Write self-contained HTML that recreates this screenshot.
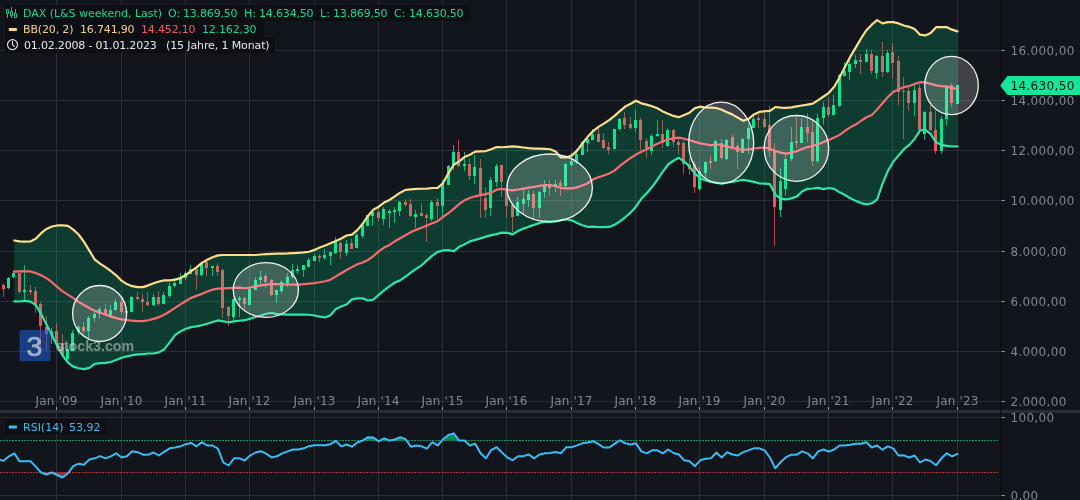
<!DOCTYPE html>
<html><head><meta charset="utf-8"><title>DAX Chart</title>
<style>
html,body{margin:0;padding:0;background:#12151c;}
body{width:1080px;height:500px;overflow:hidden;position:relative;-webkit-font-smoothing:antialiased;font-family:"DejaVu Sans","Liberation Sans",sans-serif;}
svg{position:absolute;left:0;top:0;will-change:transform;}
.lg{position:absolute;left:5px;height:16px;background:#0d0f14;}
.lg span{will-change:transform;}
.lg span{position:absolute;top:1px;line-height:16px;font-size:11px;white-space:nowrap;}
.g{color:#14d996} .y{color:#f3d58a} .r{color:#ef5f6a} .w{color:#e6e7ea} .b{color:#3dbff5}
text{font-family:"DejaVu Sans","Liberation Sans",sans-serif;}
</style></head><body>
<svg width="1080" height="500" viewBox="0 0 1080 500">

<path d="M56.5,0V500M121.5,0V500M185.5,0V500M249.5,0V500M314.5,0V500M378.5,0V500M442.5,0V500M506.5,0V500M571.5,0V500M635.5,0V500M699.5,0V500M764.5,0V500M828.5,0V500M892.5,0V500M957.5,0V500M0,50.5H1000M0,100.5H1000M0,150.5H1000M0,200.5H1000M0,251.5H1000M0,301.5H1000M0,351.5H1000M0,401.5H1000" stroke="#2b2e37" stroke-width="1" fill="none" shape-rendering="crispEdges"/>
<path d="M0,417.5H1000M0,495.5H1000" stroke="#2b2e37" stroke-width="1" fill="none" shape-rendering="crispEdges"/>
<path d="M3,283h1V297h-1ZM19,273h1V293h-1ZM30,285h1V295h-1ZM35,287h1V313h-1ZM40,302h1V348h-1ZM46,316h1V350h-1ZM56,323h1V349h-1ZM62,334h1V357h-1ZM83,322h1V334h-1ZM105,304h1V315h-1ZM121,298h1V314h-1ZM137,292h1V300h-1ZM142,294h1V312h-1ZM147,292h1V306h-1ZM158,291h1V306h-1ZM196,268h1V290h-1ZM206,260h1V276h-1ZM217,263h1V276h-1ZM222,269h1V318h-1ZM228,306h1V326h-1ZM244,297h1V310h-1ZM265,274h1V288h-1ZM271,279h1V296h-1ZM319,254h1V262h-1ZM340,241h1V259h-1ZM351,239h1V249h-1ZM378,208h1V221h-1ZM405,199h1V207h-1ZM410,199h1V217h-1ZM421,203h1V216h-1ZM426,213h1V242h-1ZM437,198h1V220h-1ZM458,140h1V167h-1ZM469,159h1V180h-1ZM480,159h1V218h-1ZM485,187h1V218h-1ZM501,165h1V197h-1ZM506,188h1V218h-1ZM512,205h1V232h-1ZM533,191h1V220h-1ZM549,181h1V196h-1ZM560,180h1V196h-1ZM598,128h1V142h-1ZM603,133h1V149h-1ZM608,142h1V154h-1ZM624,112h1V129h-1ZM630,117h1V130h-1ZM640,118h1V150h-1ZM646,138h1V158h-1ZM662,120h1V148h-1ZM673,129h1V147h-1ZM678,139h1V154h-1ZM683,141h1V174h-1ZM689,158h1V175h-1ZM694,161h1V193h-1ZM710,155h1V169h-1ZM721,139h1V159h-1ZM732,134h1V148h-1ZM737,143h1V169h-1ZM758,114h1V128h-1ZM764,110h1V128h-1ZM769,106h1V157h-1ZM774,143h1V246h-1ZM796,117h1V148h-1ZM807,113h1V142h-1ZM812,121h1V166h-1ZM828,97h1V117h-1ZM860,54h1V74h-1ZM871,50h1V74h-1ZM882,42h1V77h-1ZM892,43h1V79h-1ZM898,56h1V105h-1ZM903,77h1V139h-1ZM908,85h1V111h-1ZM919,84h1V134h-1ZM930,105h1V131h-1ZM935,111h1V154h-1ZM951,83h1V107h-1Z" fill="#f6505f" fill-opacity="0.74" shape-rendering="crispEdges"/>
<path d="M8,277h1V289h-1ZM13,270h1V278h-1ZM24,265h1V300h-1ZM51,328h1V344h-1ZM67,345h1V361h-1ZM72,330h1V351h-1ZM78,325h1V335h-1ZM88,316h1V338h-1ZM94,312h1V322h-1ZM99,307h1V319h-1ZM110,305h1V318h-1ZM115,299h1V311h-1ZM126,308h1V314h-1ZM131,296h1V312h-1ZM153,294h1V306h-1ZM163,292h1V304h-1ZM169,283h1V298h-1ZM174,278h1V287h-1ZM180,273h1V284h-1ZM185,271h1V280h-1ZM190,265h1V274h-1ZM201,262h1V276h-1ZM212,266h1V276h-1ZM233,298h1V322h-1ZM239,296h1V317h-1ZM249,288h1V305h-1ZM255,277h1V290h-1ZM260,271h1V284h-1ZM276,290h1V303h-1ZM281,280h1V293h-1ZM287,273h1V287h-1ZM292,264h1V279h-1ZM297,265h1V274h-1ZM303,265h1V277h-1ZM308,258h1V267h-1ZM314,254h1V261h-1ZM324,249h1V260h-1ZM330,252h1V265h-1ZM335,237h1V254h-1ZM346,240h1V256h-1ZM356,233h1V248h-1ZM362,225h1V238h-1ZM367,215h1V226h-1ZM372,211h1V226h-1ZM383,207h1V225h-1ZM389,209h1V228h-1ZM394,207h1V223h-1ZM399,201h1V216h-1ZM415,210h1V228h-1ZM431,200h1V221h-1ZM442,180h1V216h-1ZM448,165h1V185h-1ZM453,145h1V170h-1ZM464,152h1V171h-1ZM474,155h1V184h-1ZM490,177h1V216h-1ZM496,164h1V187h-1ZM517,197h1V216h-1ZM523,189h1V213h-1ZM528,190h1V207h-1ZM539,191h1V218h-1ZM544,180h1V198h-1ZM555,180h1V192h-1ZM565,163h1V190h-1ZM571,153h1V166h-1ZM576,149h1V164h-1ZM582,142h1V155h-1ZM587,139h1V152h-1ZM592,129h1V140h-1ZM614,129h1V149h-1ZM619,118h1V130h-1ZM635,110h1V132h-1ZM651,134h1V155h-1ZM657,120h1V137h-1ZM667,128h1V147h-1ZM699,167h1V191h-1ZM705,161h1V178h-1ZM715,140h1V162h-1ZM726,139h1V160h-1ZM742,138h1V153h-1ZM748,125h1V154h-1ZM753,116h1V128h-1ZM780,168h1V217h-1ZM785,154h1V196h-1ZM791,127h1V161h-1ZM801,118h1V143h-1ZM817,114h1V163h-1ZM823,102h1V125h-1ZM833,95h1V115h-1ZM839,74h1V107h-1ZM844,62h1V76h-1ZM849,60h1V80h-1ZM855,55h1V68h-1ZM866,49h1V62h-1ZM876,55h1V79h-1ZM887,50h1V73h-1ZM914,85h1V116h-1ZM924,111h1V140h-1ZM941,116h1V154h-1ZM946,86h1V125h-1ZM957,85h1V104h-1Z" fill="#10e494" fill-opacity="0.74" shape-rendering="crispEdges"/>
<path d="M2,285h3V289h-3ZM18,273h3V292h-3ZM29,290h3V292h-3ZM34,291h3V304h-3ZM39,304h3V326h-3ZM45,327h3V334h-3ZM55,331h3V344h-3ZM61,343h3V355h-3ZM82,327h3V331h-3ZM104,309h3V315h-3ZM120,302h3V312h-3ZM136,297h3V299h-3ZM141,299h3V302h-3ZM146,302h3V305h-3ZM157,297h3V304h-3ZM195,269h3V275h-3ZM205,262h3V268h-3ZM216,266h3V272h-3ZM221,270h3V308h-3ZM227,307h3V316h-3ZM243,298h3V304h-3ZM264,276h3V282h-3ZM270,280h3V295h-3ZM318,256h3V258h-3ZM339,243h3V252h-3ZM350,243h3V249h-3ZM377,212h3V218h-3ZM404,202h3V205h-3ZM409,204h3V216h-3ZM420,213h3V216h-3ZM425,215h3V218h-3ZM436,202h3V206h-3ZM457,152h3V166h-3ZM468,164h3V176h-3ZM479,168h3V195h-3ZM484,198h3V210h-3ZM500,165h3V182h-3ZM505,188h3V206h-3ZM511,205h3V217h-3ZM532,194h3V208h-3ZM548,185h3V188h-3ZM559,183h3V186h-3ZM597,134h3V142h-3ZM602,140h3V148h-3ZM607,147h3V150h-3ZM623,118h3V125h-3ZM629,124h3V128h-3ZM639,120h3V140h-3ZM645,141h3V148h-3ZM661,134h3V143h-3ZM672,130h3V142h-3ZM677,142h3V145h-3ZM682,143h3V164h-3ZM688,164h3V169h-3ZM693,164h3V187h-3ZM709,161h3V163h-3ZM720,143h3V158h-3ZM731,137h3V147h-3ZM736,146h3V152h-3ZM757,118h3V120h-3ZM763,119h3V127h-3ZM768,125h3V151h-3ZM773,150h3V207h-3ZM795,141h3V143h-3ZM806,127h3V133h-3ZM811,132h3V161h-3ZM827,107h3V115h-3ZM859,60h3V62h-3ZM870,54h3V71h-3ZM881,56h3V72h-3ZM891,52h3V63h-3ZM897,61h3V92h-3ZM902,91h3V92h-3ZM907,91h3V103h-3ZM918,88h3V130h-3ZM929,112h3V130h-3ZM934,130h3V151h-3ZM950,85h3V103h-3Z" fill="#f6505f" shape-rendering="crispEdges"/>
<path d="M7,278h3V288h-3ZM12,273h3V277h-3ZM23,290h3V292h-3ZM50,331h3V335h-3ZM66,349h3V359h-3ZM71,333h3V351h-3ZM77,327h3V332h-3ZM87,318h3V331h-3ZM93,314h3V318h-3ZM98,309h3V314h-3ZM109,310h3V316h-3ZM114,302h3V310h-3ZM125,311h3V313h-3ZM130,297h3V312h-3ZM152,297h3V305h-3ZM162,295h3V304h-3ZM168,286h3V296h-3ZM173,283h3V286h-3ZM179,278h3V284h-3ZM184,273h3V278h-3ZM189,269h3V274h-3ZM200,263h3V275h-3ZM211,266h3V268h-3ZM232,299h3V317h-3ZM238,298h3V300h-3ZM248,289h3V305h-3ZM254,280h3V290h-3ZM259,277h3V280h-3ZM275,290h3V295h-3ZM280,282h3V291h-3ZM286,277h3V283h-3ZM291,270h3V277h-3ZM296,269h3V271h-3ZM302,265h3V270h-3ZM307,260h3V267h-3ZM313,256h3V261h-3ZM323,255h3V258h-3ZM329,252h3V256h-3ZM334,242h3V253h-3ZM345,244h3V253h-3ZM355,235h3V248h-3ZM361,225h3V236h-3ZM366,215h3V226h-3ZM371,212h3V216h-3ZM382,209h3V219h-3ZM388,211h3V213h-3ZM393,210h3V212h-3ZM398,202h3V211h-3ZM414,214h3V217h-3ZM430,202h3V219h-3ZM441,184h3V206h-3ZM447,166h3V185h-3ZM452,152h3V165h-3ZM463,164h3V166h-3ZM473,167h3V176h-3ZM489,180h3V208h-3ZM495,166h3V182h-3ZM516,202h3V216h-3ZM522,199h3V204h-3ZM527,194h3V200h-3ZM538,192h3V208h-3ZM543,186h3V192h-3ZM554,184h3V186h-3ZM564,164h3V186h-3ZM570,161h3V165h-3ZM575,154h3V162h-3ZM581,142h3V155h-3ZM586,139h3V143h-3ZM591,134h3V140h-3ZM613,129h3V149h-3ZM618,119h3V129h-3ZM634,120h3V128h-3ZM650,136h3V151h-3ZM656,134h3V136h-3ZM666,130h3V146h-3ZM698,171h3V189h-3ZM704,162h3V173h-3ZM714,141h3V161h-3ZM725,140h3V159h-3ZM741,139h3V153h-3ZM747,128h3V139h-3ZM752,119h3V128h-3ZM779,181h3V210h-3ZM784,159h3V189h-3ZM790,142h3V159h-3ZM800,127h3V143h-3ZM816,118h3V161h-3ZM822,107h3V118h-3ZM832,105h3V115h-3ZM838,75h3V106h-3ZM843,71h3V76h-3ZM848,64h3V72h-3ZM854,60h3V64h-3ZM865,54h3V62h-3ZM875,56h3V73h-3ZM886,53h3V72h-3ZM913,90h3V103h-3ZM923,112h3V134h-3ZM940,119h3V151h-3ZM945,86h3V119h-3ZM956,85h3V104h-3Z" fill="#10e494" shape-rendering="crispEdges"/>
<path d="M14.32,240.47 L19.67,241.41 L25.03,241.67 L30.39,241.51 L35.75,238.84 L41.11,233.17 L46.47,228.89 L51.83,226.53 L57.19,225.46 L62.55,225.36 L67.91,225.79 L73.26,229.62 L78.62,234.50 L83.98,241.88 L89.34,250.57 L94.70,259.50 L100.06,263.54 L105.42,267.20 L110.78,271.01 L116.14,275.31 L121.50,280.66 L126.86,284.08 L132.21,286.16 L137.57,287.19 L142.93,287.09 L148.29,285.34 L153.65,283.22 L159.01,281.51 L164.37,280.33 L169.73,280.33 L175.09,279.65 L180.45,278.08 L185.80,275.01 L191.16,271.19 L196.52,267.37 L201.88,262.91 L207.24,259.71 L212.60,257.23 L217.96,255.40 L223.32,255.00 L228.68,255.00 L234.03,255.00 L239.39,255.00 L244.75,255.00 L250.11,255.00 L255.47,255.00 L260.83,254.48 L266.19,254.06 L271.55,253.86 L276.91,253.66 L282.27,253.53 L287.62,253.39 L292.98,253.13 L298.34,252.78 L303.70,252.46 L309.06,251.75 L314.42,249.89 L319.78,247.59 L325.14,245.57 L330.50,243.33 L335.86,240.98 L341.22,238.41 L346.57,235.50 L351.93,234.62 L357.29,230.10 L362.65,223.82 L368.01,215.99 L373.37,209.66 L378.73,206.69 L384.09,202.56 L389.45,200.02 L394.80,196.31 L400.16,192.67 L405.52,189.88 L410.88,189.40 L416.24,188.82 L421.60,188.74 L426.96,188.63 L432.32,188.00 L437.68,187.87 L443.04,182.95 L448.39,173.22 L453.75,164.73 L459.11,161.38 L464.47,157.11 L469.83,154.74 L475.19,151.61 L480.55,151.30 L485.91,151.04 L491.27,149.32 L496.63,147.02 L501.99,147.23 L507.34,146.93 L512.70,146.39 L518.06,146.81 L523.42,147.51 L528.78,148.17 L534.14,148.60 L539.50,148.67 L544.86,148.78 L550.22,149.24 L555.58,151.46 L560.93,157.41 L566.29,157.44 L571.65,155.57 L577.01,150.65 L582.37,143.51 L587.73,136.82 L593.09,131.08 L598.45,126.87 L603.81,123.66 L609.16,120.12 L614.52,115.83 L619.88,111.14 L625.24,106.55 L630.60,103.74 L635.96,100.69 L641.32,103.33 L646.68,104.67 L652.04,106.28 L657.40,108.19 L662.75,111.38 L668.11,113.82 L673.47,115.92 L678.83,117.29 L684.19,115.01 L689.55,112.70 L694.91,108.08 L700.27,106.71 L705.63,107.50 L710.99,107.57 L716.35,107.98 L721.70,109.69 L727.06,112.18 L732.42,114.59 L737.78,117.67 L743.14,120.72 L748.50,119.02 L753.86,114.39 L759.22,111.88 L764.58,111.24 L769.93,110.83 L775.29,107.03 L780.65,107.55 L786.01,107.95 L791.37,107.29 L796.73,106.40 L802.09,105.47 L807.45,104.56 L812.81,103.63 L818.17,100.11 L823.52,96.51 L828.88,92.78 L834.24,86.81 L839.60,77.46 L844.96,66.74 L850.32,56.68 L855.68,47.65 L861.04,38.47 L866.40,30.27 L871.76,24.68 L877.12,20.11 L882.47,23.43 L887.83,22.14 L893.19,22.16 L898.55,23.42 L903.91,25.48 L909.27,26.82 L914.63,29.01 L919.99,34.66 L925.35,35.43 L930.71,32.89 L936.06,27.13 L941.42,27.04 L946.78,27.22 L952.14,29.65 L957.50,31.33 L957.50,146.33 L952.14,146.52 L946.78,145.84 L941.42,144.92 L936.06,142.31 L930.71,134.22 L925.35,129.90 L919.99,130.52 L914.63,138.89 L909.27,144.89 L903.91,149.22 L898.55,155.56 L893.19,161.90 L887.83,171.10 L882.47,183.91 L877.12,199.49 L871.76,203.29 L866.40,204.39 L861.04,203.08 L855.68,200.87 L850.32,198.33 L844.96,194.98 L839.60,192.31 L834.24,188.94 L828.88,188.04 L823.52,189.12 L818.17,187.91 L812.81,188.48 L807.45,188.81 L802.09,191.43 L796.73,196.61 L791.37,198.40 L786.01,199.46 L780.65,198.66 L775.29,194.61 L769.93,184.16 L764.58,183.65 L759.22,183.38 L753.86,181.85 L748.50,180.86 L743.14,179.79 L737.78,180.77 L732.42,181.99 L727.06,182.72 L721.70,183.66 L716.35,182.94 L710.99,181.87 L705.63,180.42 L700.27,178.33 L694.91,173.51 L689.55,166.63 L684.19,161.55 L678.83,157.83 L673.47,160.73 L668.11,164.50 L662.75,171.88 L657.40,179.74 L652.04,187.03 L646.68,193.32 L641.32,198.86 L635.96,206.66 L630.60,212.60 L625.24,217.29 L619.88,221.34 L614.52,224.88 L609.16,226.92 L603.81,227.17 L598.45,227.05 L593.09,226.69 L587.73,226.82 L582.37,225.21 L577.01,222.90 L571.65,220.33 L566.29,219.26 L560.93,220.18 L555.58,221.31 L550.22,221.93 L544.86,221.71 L539.50,223.04 L534.14,224.90 L528.78,226.66 L523.42,228.60 L518.06,231.04 L512.70,234.36 L507.34,232.82 L501.99,232.65 L496.63,234.18 L491.27,235.11 L485.91,236.66 L480.55,238.34 L475.19,239.91 L469.83,241.43 L464.47,244.41 L459.11,246.82 L453.75,251.29 L448.39,250.06 L443.04,250.47 L437.68,251.88 L432.32,255.66 L426.96,260.42 L421.60,265.31 L416.24,268.70 L410.88,272.59 L405.52,276.61 L400.16,280.36 L394.80,282.49 L389.45,286.28 L384.09,290.30 L378.73,294.86 L373.37,299.70 L368.01,300.49 L362.65,298.38 L357.29,298.35 L351.93,299.41 L346.57,304.44 L341.22,306.45 L335.86,309.08 L330.50,315.23 L325.14,317.50 L319.78,316.66 L314.42,315.52 L309.06,314.77 L303.70,314.67 L298.34,314.67 L292.98,314.67 L287.62,314.67 L282.27,314.45 L276.91,314.18 L271.55,313.02 L266.19,313.78 L260.83,315.55 L255.47,316.96 L250.11,318.71 L244.75,320.19 L239.39,320.72 L234.03,321.37 L228.68,322.50 L223.32,321.30 L217.96,320.44 L212.60,321.99 L207.24,323.70 L201.88,325.29 L196.52,326.36 L191.16,327.15 L185.80,328.76 L180.45,331.45 L175.09,335.20 L169.73,342.30 L164.37,349.20 L159.01,352.40 L153.65,353.50 L148.29,353.50 L142.93,354.04 L137.57,354.42 L132.21,355.20 L126.86,356.40 L121.50,357.80 L116.14,360.00 L110.78,362.00 L105.42,362.81 L100.06,363.20 L94.70,363.90 L89.34,367.93 L83.98,369.06 L78.62,368.26 L73.26,366.62 L67.91,362.60 L62.55,355.49 L57.19,345.77 L51.83,335.33 L46.47,324.61 L41.11,314.04 L35.75,304.95 L30.39,301.58 L25.03,300.90 L19.67,301.48 L14.32,301.38Z" fill="#05e085" fill-opacity="0.195" stroke="none"/>
<path d="M14.32,240.47 L19.67,241.41 L25.03,241.67 L30.39,241.51 L35.75,238.84 L41.11,233.17 L46.47,228.89 L51.83,226.53 L57.19,225.46 L62.55,225.36 L67.91,225.79 L73.26,229.62 L78.62,234.50 L83.98,241.88 L89.34,250.57 L94.70,259.50 L100.06,263.54 L105.42,267.20 L110.78,271.01 L116.14,275.31 L121.50,280.66 L126.86,284.08 L132.21,286.16 L137.57,287.19 L142.93,287.09 L148.29,285.34 L153.65,283.22 L159.01,281.51 L164.37,280.33 L169.73,280.33 L175.09,279.65 L180.45,278.08 L185.80,275.01 L191.16,271.19 L196.52,267.37 L201.88,262.91 L207.24,259.71 L212.60,257.23 L217.96,255.40 L223.32,255.00 L228.68,255.00 L234.03,255.00 L239.39,255.00 L244.75,255.00 L250.11,255.00 L255.47,255.00 L260.83,254.48 L266.19,254.06 L271.55,253.86 L276.91,253.66 L282.27,253.53 L287.62,253.39 L292.98,253.13 L298.34,252.78 L303.70,252.46 L309.06,251.75 L314.42,249.89 L319.78,247.59 L325.14,245.57 L330.50,243.33 L335.86,240.98 L341.22,238.41 L346.57,235.50 L351.93,234.62 L357.29,230.10 L362.65,223.82 L368.01,215.99 L373.37,209.66 L378.73,206.69 L384.09,202.56 L389.45,200.02 L394.80,196.31 L400.16,192.67 L405.52,189.88 L410.88,189.40 L416.24,188.82 L421.60,188.74 L426.96,188.63 L432.32,188.00 L437.68,187.87 L443.04,182.95 L448.39,173.22 L453.75,164.73 L459.11,161.38 L464.47,157.11 L469.83,154.74 L475.19,151.61 L480.55,151.30 L485.91,151.04 L491.27,149.32 L496.63,147.02 L501.99,147.23 L507.34,146.93 L512.70,146.39 L518.06,146.81 L523.42,147.51 L528.78,148.17 L534.14,148.60 L539.50,148.67 L544.86,148.78 L550.22,149.24 L555.58,151.46 L560.93,157.41 L566.29,157.44 L571.65,155.57 L577.01,150.65 L582.37,143.51 L587.73,136.82 L593.09,131.08 L598.45,126.87 L603.81,123.66 L609.16,120.12 L614.52,115.83 L619.88,111.14 L625.24,106.55 L630.60,103.74 L635.96,100.69 L641.32,103.33 L646.68,104.67 L652.04,106.28 L657.40,108.19 L662.75,111.38 L668.11,113.82 L673.47,115.92 L678.83,117.29 L684.19,115.01 L689.55,112.70 L694.91,108.08 L700.27,106.71 L705.63,107.50 L710.99,107.57 L716.35,107.98 L721.70,109.69 L727.06,112.18 L732.42,114.59 L737.78,117.67 L743.14,120.72 L748.50,119.02 L753.86,114.39 L759.22,111.88 L764.58,111.24 L769.93,110.83 L775.29,107.03 L780.65,107.55 L786.01,107.95 L791.37,107.29 L796.73,106.40 L802.09,105.47 L807.45,104.56 L812.81,103.63 L818.17,100.11 L823.52,96.51 L828.88,92.78 L834.24,86.81 L839.60,77.46 L844.96,66.74 L850.32,56.68 L855.68,47.65 L861.04,38.47 L866.40,30.27 L871.76,24.68 L877.12,20.11 L882.47,23.43 L887.83,22.14 L893.19,22.16 L898.55,23.42 L903.91,25.48 L909.27,26.82 L914.63,29.01 L919.99,34.66 L925.35,35.43 L930.71,32.89 L936.06,27.13 L941.42,27.04 L946.78,27.22 L952.14,29.65 L957.50,31.33" fill="none" stroke="#fbde8c" stroke-width="2.2" stroke-linejoin="round" stroke-linecap="round"/>
<path d="M14.32,271.64 L19.67,271.35 L25.03,271.33 L30.39,271.44 L35.75,272.98 L41.11,275.26 L46.47,278.15 L51.83,282.23 L57.19,286.91 L62.55,291.36 L67.91,294.57 L73.26,298.12 L78.62,301.85 L83.98,305.06 L89.34,308.01 L94.70,310.69 L100.06,312.80 L105.42,314.58 L110.78,316.37 L116.14,318.15 L121.50,319.30 L126.86,320.18 L132.21,320.72 L137.57,321.08 L142.93,321.13 L148.29,320.27 L153.65,318.90 L159.01,317.16 L164.37,314.48 L169.73,311.42 L175.09,307.86 L180.45,304.31 L185.80,300.95 L191.16,297.89 L196.52,295.89 L201.88,293.87 L207.24,291.57 L212.60,289.68 L217.96,288.60 L223.32,288.33 L228.68,288.12 L234.03,287.82 L239.39,287.65 L244.75,288.25 L250.11,287.48 L255.47,286.41 L260.83,285.44 L266.19,284.64 L271.55,284.17 L276.91,284.18 L282.27,284.35 L287.62,284.52 L292.98,284.61 L298.34,284.54 L303.70,284.13 L309.06,283.60 L314.42,283.06 L319.78,282.24 L325.14,281.22 L330.50,279.69 L335.86,276.34 L341.22,273.18 L346.57,270.06 L351.93,267.10 L357.29,264.29 L362.65,262.54 L368.01,259.97 L373.37,256.01 L378.73,251.39 L384.09,247.56 L389.45,244.94 L394.80,241.31 L400.16,238.25 L405.52,235.30 L410.88,232.13 L416.24,229.85 L421.60,227.82 L426.96,225.54 L432.32,223.30 L437.68,221.17 L443.04,216.83 L448.39,213.27 L453.75,208.91 L459.11,204.00 L464.47,200.35 L469.83,198.07 L475.19,196.31 L480.55,195.15 L485.91,194.15 L491.27,192.63 L496.63,189.69 L501.99,188.87 L507.34,189.74 L512.70,190.29 L518.06,189.51 L523.42,188.57 L528.78,187.68 L534.14,186.86 L539.50,185.92 L544.86,185.14 L550.22,185.00 L555.58,186.30 L560.93,187.80 L566.29,188.47 L571.65,188.34 L577.01,187.35 L582.37,185.53 L587.73,183.26 L593.09,179.36 L598.45,177.25 L603.81,175.53 L609.16,173.55 L614.52,170.62 L619.88,165.93 L625.24,161.90 L630.60,157.96 L635.96,154.61 L641.32,151.84 L646.68,149.16 L652.04,146.48 L657.40,143.86 L662.75,141.58 L668.11,139.24 L673.47,138.31 L678.83,137.58 L684.19,138.76 L689.55,140.30 L694.91,141.89 L700.27,143.34 L705.63,144.29 L710.99,145.30 L716.35,144.23 L721.70,145.18 L727.06,146.62 L732.42,147.98 L737.78,149.03 L743.14,149.97 L748.50,149.36 L753.86,148.49 L759.22,147.81 L764.58,147.62 L769.93,148.68 L775.29,150.93 L780.65,152.67 L786.01,153.63 L791.37,152.56 L796.73,151.23 L802.09,148.95 L807.45,147.07 L812.81,145.96 L818.17,144.22 L823.52,142.01 L828.88,139.89 L834.24,137.54 L839.60,134.87 L844.96,130.86 L850.32,127.34 L855.68,124.55 L861.04,120.93 L866.40,117.26 L871.76,114.91 L877.12,109.48 L882.47,103.23 L887.83,97.10 L893.19,91.87 L898.55,89.56 L903.91,87.05 L909.27,85.98 L914.63,83.98 L919.99,82.17 L925.35,82.43 L930.71,83.85 L936.06,85.34 L941.42,86.09 L946.78,86.56 L952.14,87.94 L957.50,89.17" fill="none" stroke="#f96a73" stroke-width="2.2" stroke-linejoin="round" stroke-linecap="round"/>
<path d="M14.32,301.38 L19.67,301.48 L25.03,300.90 L30.39,301.58 L35.75,304.95 L41.11,314.04 L46.47,324.61 L51.83,335.33 L57.19,345.77 L62.55,355.49 L67.91,362.60 L73.26,366.62 L78.62,368.26 L83.98,369.06 L89.34,367.93 L94.70,363.90 L100.06,363.20 L105.42,362.81 L110.78,362.00 L116.14,360.00 L121.50,357.80 L126.86,356.40 L132.21,355.20 L137.57,354.42 L142.93,354.04 L148.29,353.50 L153.65,353.50 L159.01,352.40 L164.37,349.20 L169.73,342.30 L175.09,335.20 L180.45,331.45 L185.80,328.76 L191.16,327.15 L196.52,326.36 L201.88,325.29 L207.24,323.70 L212.60,321.99 L217.96,320.44 L223.32,321.30 L228.68,322.50 L234.03,321.37 L239.39,320.72 L244.75,320.19 L250.11,318.71 L255.47,316.96 L260.83,315.55 L266.19,313.78 L271.55,313.02 L276.91,314.18 L282.27,314.45 L287.62,314.67 L292.98,314.67 L298.34,314.67 L303.70,314.67 L309.06,314.77 L314.42,315.52 L319.78,316.66 L325.14,317.50 L330.50,315.23 L335.86,309.08 L341.22,306.45 L346.57,304.44 L351.93,299.41 L357.29,298.35 L362.65,298.38 L368.01,300.49 L373.37,299.70 L378.73,294.86 L384.09,290.30 L389.45,286.28 L394.80,282.49 L400.16,280.36 L405.52,276.61 L410.88,272.59 L416.24,268.70 L421.60,265.31 L426.96,260.42 L432.32,255.66 L437.68,251.88 L443.04,250.47 L448.39,250.06 L453.75,251.29 L459.11,246.82 L464.47,244.41 L469.83,241.43 L475.19,239.91 L480.55,238.34 L485.91,236.66 L491.27,235.11 L496.63,234.18 L501.99,232.65 L507.34,232.82 L512.70,234.36 L518.06,231.04 L523.42,228.60 L528.78,226.66 L534.14,224.90 L539.50,223.04 L544.86,221.71 L550.22,221.93 L555.58,221.31 L560.93,220.18 L566.29,219.26 L571.65,220.33 L577.01,222.90 L582.37,225.21 L587.73,226.82 L593.09,226.69 L598.45,227.05 L603.81,227.17 L609.16,226.92 L614.52,224.88 L619.88,221.34 L625.24,217.29 L630.60,212.60 L635.96,206.66 L641.32,198.86 L646.68,193.32 L652.04,187.03 L657.40,179.74 L662.75,171.88 L668.11,164.50 L673.47,160.73 L678.83,157.83 L684.19,161.55 L689.55,166.63 L694.91,173.51 L700.27,178.33 L705.63,180.42 L710.99,181.87 L716.35,182.94 L721.70,183.66 L727.06,182.72 L732.42,181.99 L737.78,180.77 L743.14,179.79 L748.50,180.86 L753.86,181.85 L759.22,183.38 L764.58,183.65 L769.93,184.16 L775.29,194.61 L780.65,198.66 L786.01,199.46 L791.37,198.40 L796.73,196.61 L802.09,191.43 L807.45,188.81 L812.81,188.48 L818.17,187.91 L823.52,189.12 L828.88,188.04 L834.24,188.94 L839.60,192.31 L844.96,194.98 L850.32,198.33 L855.68,200.87 L861.04,203.08 L866.40,204.39 L871.76,203.29 L877.12,199.49 L882.47,183.91 L887.83,171.10 L893.19,161.90 L898.55,155.56 L903.91,149.22 L909.27,144.89 L914.63,138.89 L919.99,130.52 L925.35,129.90 L930.71,134.22 L936.06,142.31 L941.42,144.92 L946.78,145.84 L952.14,146.52 L957.50,146.33" fill="none" stroke="#2ee6a6" stroke-width="2.2" stroke-linejoin="round" stroke-linecap="round"/>
<ellipse cx="99.6" cy="313.5" rx="27.0" ry="28.0" fill="#ffffff" fill-opacity="0.2" stroke="#f2f2f2" stroke-width="1.3"/>
<ellipse cx="265.85" cy="290.0" rx="32.6" ry="27.4" fill="#ffffff" fill-opacity="0.2" stroke="#f2f2f2" stroke-width="1.3"/>
<ellipse cx="549.7" cy="187.8" rx="42.7" ry="33.8" fill="#ffffff" fill-opacity="0.2" stroke="#f2f2f2" stroke-width="1.3"/>
<ellipse cx="721.2" cy="142.9" rx="32.5" ry="40.7" fill="#ffffff" fill-opacity="0.2" stroke="#f2f2f2" stroke-width="1.3"/>
<ellipse cx="796.4" cy="148.4" rx="32.25" ry="32.9" fill="#ffffff" fill-opacity="0.2" stroke="#f2f2f2" stroke-width="1.3"/>
<ellipse cx="951.5" cy="85.5" rx="26.8" ry="29.2" fill="#ffffff" fill-opacity="0.2" stroke="#f2f2f2" stroke-width="1.3"/>
<rect x="19.5" y="330" width="31" height="31" rx="1.5" fill="#1f5fd6" opacity="0.55"/><text x="34.5" y="356.3" style="font-family:'Liberation Sans',sans-serif;font-weight:normal;font-size:28.5px" text-anchor="middle" fill="#ffffff" stroke="#ffffff" stroke-width="0.7" opacity="0.58">3</text><text x="56" y="350.6" style="font-family:'Liberation Sans',sans-serif;font-weight:bold;font-size:14.2px" fill="#f4f4f8" opacity="0.45">stock3.com</text>
<rect x="0" y="410" width="1080" height="3" fill="#2a2d36"/>
<path d="M56.5,407V410M121.5,407V410M185.5,407V410M249.5,407V410M314.5,407V410M378.5,407V410M442.5,407V410M506.5,407V410M571.5,407V410M635.5,407V410M699.5,407V410M764.5,407V410M828.5,407V410M892.5,407V410M957.5,407V410" stroke="#9a9da5" stroke-width="1" fill="none" shape-rendering="crispEdges"/>
<text x="56.5" y="405" font-size="12" fill="#83868e" text-anchor="middle" letter-spacing="0.15">Jan '09</text>
<text x="121.5" y="405" font-size="12" fill="#83868e" text-anchor="middle" letter-spacing="0.15">Jan '10</text>
<text x="185.5" y="405" font-size="12" fill="#83868e" text-anchor="middle" letter-spacing="0.15">Jan '11</text>
<text x="249.5" y="405" font-size="12" fill="#83868e" text-anchor="middle" letter-spacing="0.15">Jan '12</text>
<text x="314.5" y="405" font-size="12" fill="#83868e" text-anchor="middle" letter-spacing="0.15">Jan '13</text>
<text x="378.5" y="405" font-size="12" fill="#83868e" text-anchor="middle" letter-spacing="0.15">Jan '14</text>
<text x="442.5" y="405" font-size="12" fill="#83868e" text-anchor="middle" letter-spacing="0.15">Jan '15</text>
<text x="506.5" y="405" font-size="12" fill="#83868e" text-anchor="middle" letter-spacing="0.15">Jan '16</text>
<text x="571.5" y="405" font-size="12" fill="#83868e" text-anchor="middle" letter-spacing="0.15">Jan '17</text>
<text x="635.5" y="405" font-size="12" fill="#83868e" text-anchor="middle" letter-spacing="0.15">Jan '18</text>
<text x="699.5" y="405" font-size="12" fill="#83868e" text-anchor="middle" letter-spacing="0.15">Jan '19</text>
<text x="764.5" y="405" font-size="12" fill="#83868e" text-anchor="middle" letter-spacing="0.15">Jan '20</text>
<text x="828.5" y="405" font-size="12" fill="#83868e" text-anchor="middle" letter-spacing="0.15">Jan '21</text>
<text x="892.5" y="405" font-size="12" fill="#83868e" text-anchor="middle" letter-spacing="0.15">Jan '22</text>
<text x="957.5" y="405" font-size="12" fill="#83868e" text-anchor="middle" letter-spacing="0.15">Jan '23</text>
<rect x="1000" y="0" width="1" height="500" fill="#0b0d12"/>
<text x="1010.4" y="54.9" font-size="12" fill="#83868e" letter-spacing="0.36">16.000,00</text>
<text x="1010.4" y="104.9" font-size="12" fill="#83868e" letter-spacing="0.36">14.000,00</text>
<text x="1010.4" y="154.9" font-size="12" fill="#83868e" letter-spacing="0.36">12.000,00</text>
<text x="1010.4" y="204.9" font-size="12" fill="#83868e" letter-spacing="0.36">10.000,00</text>
<text x="1010.4" y="255.9" font-size="12" fill="#83868e" letter-spacing="0.36">8.000,00</text>
<text x="1010.4" y="305.9" font-size="12" fill="#83868e" letter-spacing="0.36">6.000,00</text>
<text x="1010.4" y="355.9" font-size="12" fill="#83868e" letter-spacing="0.36">4.000,00</text>
<text x="1010.4" y="405.9" font-size="12" fill="#83868e" letter-spacing="0.36">2.000,00</text>
<text x="1010.4" y="421.9" font-size="12" fill="#83868e" letter-spacing="0.36">100,00</text>
<text x="1010.4" y="499.9" font-size="12" fill="#83868e" letter-spacing="0.36">0,00</text>
<path d="M1001,50.5H1005M1001,100.5H1005M1001,150.5H1005M1001,200.5H1005M1001,251.5H1005M1001,301.5H1005M1001,351.5H1005M1001,401.5H1005M1001,417.5H1005M1001,495.5H1005" stroke="#8a8d95" stroke-width="1" fill="none" shape-rendering="crispEdges"/>
<path d="M0,440.5H999" stroke="#0f9463" stroke-width="1" stroke-dasharray="2,1" fill="none"/>
<path d="M0,472.5H999" stroke="#ac383f" stroke-width="1" stroke-dasharray="2,1" fill="none"/>
<clipPath id="cu"><rect x="0" y="400" width="1000" height="40.5"/></clipPath><clipPath id="cl"><rect x="0" y="472.5" width="1000" height="30"/></clipPath>
<path d="M-1.76,459.17 L3.60,460.83 L8.96,456.33 L14.32,453.33 L19.67,461.33 L25.03,461.17 L30.39,461.17 L35.75,466.67 L41.11,472.50 L46.47,474.50 L51.83,472.50 L57.19,475.00 L62.55,477.50 L67.91,473.33 L73.26,466.17 L78.62,463.67 L83.98,464.67 L89.34,459.50 L94.70,458.33 L100.06,456.17 L105.42,458.33 L110.78,456.33 L116.14,453.33 L121.50,457.50 L126.86,456.33 L132.21,451.17 L137.57,452.17 L142.93,454.67 L148.29,454.67 L153.65,452.50 L159.01,455.50 L164.37,451.67 L169.73,448.33 L175.09,447.50 L180.45,446.33 L185.80,444.17 L191.16,443.00 L196.52,446.33 L201.88,442.17 L207.24,445.50 L212.60,445.50 L217.96,448.67 L223.32,462.50 L228.68,465.50 L234.03,458.33 L239.39,458.33 L244.75,460.50 L250.11,455.50 L255.47,452.50 L260.83,451.17 L266.19,453.67 L271.55,457.50 L276.91,456.33 L282.27,453.33 L287.62,451.33 L292.98,449.50 L298.34,449.50 L303.70,448.33 L309.06,446.17 L314.42,445.33 L319.78,445.33 L325.14,445.33 L330.50,444.17 L335.86,440.83 L341.22,446.33 L346.57,444.50 L351.93,446.67 L357.29,442.50 L362.65,440.50 L368.01,437.17 L373.37,437.50 L378.73,441.33 L384.09,438.33 L389.45,440.50 L394.80,439.50 L400.16,437.17 L405.52,439.17 L410.88,446.67 L416.24,445.50 L421.60,446.33 L426.96,448.67 L432.32,442.17 L437.68,445.50 L443.04,439.17 L448.39,435.00 L453.75,433.33 L459.11,440.50 L464.47,440.50 L469.83,445.50 L475.19,443.67 L480.55,453.33 L485.91,458.33 L491.27,450.00 L496.63,447.17 L501.99,452.50 L507.34,457.50 L512.70,460.33 L518.06,456.17 L523.42,456.17 L528.78,454.50 L534.14,458.33 L539.50,454.50 L544.86,453.33 L550.22,453.00 L555.58,452.00 L560.93,453.33 L566.29,447.17 L571.65,447.17 L577.01,445.33 L582.37,443.33 L587.73,442.50 L593.09,441.17 L598.45,444.17 L603.81,447.50 L609.16,447.50 L614.52,443.83 L619.88,440.33 L625.24,443.33 L630.60,444.50 L635.96,443.33 L641.32,451.33 L646.68,453.33 L652.04,450.33 L657.40,450.33 L662.75,453.33 L668.11,449.50 L673.47,453.00 L678.83,454.50 L684.19,460.33 L689.55,461.33 L694.91,466.17 L700.27,460.33 L705.63,458.67 L710.99,458.33 L716.35,452.50 L721.70,457.50 L727.06,452.17 L732.42,454.50 L737.78,455.50 L743.14,452.17 L748.50,450.33 L753.86,448.33 L759.22,448.33 L764.58,450.33 L769.93,457.50 L775.29,468.33 L780.65,462.00 L786.01,457.17 L791.37,454.67 L796.73,454.67 L802.09,451.33 L807.45,453.33 L812.81,458.33 L818.17,451.33 L823.52,449.50 L828.88,451.67 L834.24,449.50 L839.60,445.50 L844.96,445.50 L850.32,444.67 L855.68,443.67 L861.04,443.67 L866.40,442.17 L871.76,447.50 L877.12,445.50 L882.47,449.67 L887.83,446.33 L893.19,448.33 L898.55,455.50 L903.91,455.33 L909.27,457.50 L914.63,455.50 L919.99,462.50 L925.35,459.50 L930.71,461.17 L936.06,465.33 L941.42,458.33 L946.78,453.33 L952.14,456.33 L957.50,453.83 L957.50,456 L-1.76,456Z" fill="#12a86c" fill-opacity="0.75" clip-path="url(#cu)"/>
<path d="M-1.76,459.17 L3.60,460.83 L8.96,456.33 L14.32,453.33 L19.67,461.33 L25.03,461.17 L30.39,461.17 L35.75,466.67 L41.11,472.50 L46.47,474.50 L51.83,472.50 L57.19,475.00 L62.55,477.50 L67.91,473.33 L73.26,466.17 L78.62,463.67 L83.98,464.67 L89.34,459.50 L94.70,458.33 L100.06,456.17 L105.42,458.33 L110.78,456.33 L116.14,453.33 L121.50,457.50 L126.86,456.33 L132.21,451.17 L137.57,452.17 L142.93,454.67 L148.29,454.67 L153.65,452.50 L159.01,455.50 L164.37,451.67 L169.73,448.33 L175.09,447.50 L180.45,446.33 L185.80,444.17 L191.16,443.00 L196.52,446.33 L201.88,442.17 L207.24,445.50 L212.60,445.50 L217.96,448.67 L223.32,462.50 L228.68,465.50 L234.03,458.33 L239.39,458.33 L244.75,460.50 L250.11,455.50 L255.47,452.50 L260.83,451.17 L266.19,453.67 L271.55,457.50 L276.91,456.33 L282.27,453.33 L287.62,451.33 L292.98,449.50 L298.34,449.50 L303.70,448.33 L309.06,446.17 L314.42,445.33 L319.78,445.33 L325.14,445.33 L330.50,444.17 L335.86,440.83 L341.22,446.33 L346.57,444.50 L351.93,446.67 L357.29,442.50 L362.65,440.50 L368.01,437.17 L373.37,437.50 L378.73,441.33 L384.09,438.33 L389.45,440.50 L394.80,439.50 L400.16,437.17 L405.52,439.17 L410.88,446.67 L416.24,445.50 L421.60,446.33 L426.96,448.67 L432.32,442.17 L437.68,445.50 L443.04,439.17 L448.39,435.00 L453.75,433.33 L459.11,440.50 L464.47,440.50 L469.83,445.50 L475.19,443.67 L480.55,453.33 L485.91,458.33 L491.27,450.00 L496.63,447.17 L501.99,452.50 L507.34,457.50 L512.70,460.33 L518.06,456.17 L523.42,456.17 L528.78,454.50 L534.14,458.33 L539.50,454.50 L544.86,453.33 L550.22,453.00 L555.58,452.00 L560.93,453.33 L566.29,447.17 L571.65,447.17 L577.01,445.33 L582.37,443.33 L587.73,442.50 L593.09,441.17 L598.45,444.17 L603.81,447.50 L609.16,447.50 L614.52,443.83 L619.88,440.33 L625.24,443.33 L630.60,444.50 L635.96,443.33 L641.32,451.33 L646.68,453.33 L652.04,450.33 L657.40,450.33 L662.75,453.33 L668.11,449.50 L673.47,453.00 L678.83,454.50 L684.19,460.33 L689.55,461.33 L694.91,466.17 L700.27,460.33 L705.63,458.67 L710.99,458.33 L716.35,452.50 L721.70,457.50 L727.06,452.17 L732.42,454.50 L737.78,455.50 L743.14,452.17 L748.50,450.33 L753.86,448.33 L759.22,448.33 L764.58,450.33 L769.93,457.50 L775.29,468.33 L780.65,462.00 L786.01,457.17 L791.37,454.67 L796.73,454.67 L802.09,451.33 L807.45,453.33 L812.81,458.33 L818.17,451.33 L823.52,449.50 L828.88,451.67 L834.24,449.50 L839.60,445.50 L844.96,445.50 L850.32,444.67 L855.68,443.67 L861.04,443.67 L866.40,442.17 L871.76,447.50 L877.12,445.50 L882.47,449.67 L887.83,446.33 L893.19,448.33 L898.55,455.50 L903.91,455.33 L909.27,457.50 L914.63,455.50 L919.99,462.50 L925.35,459.50 L930.71,461.17 L936.06,465.33 L941.42,458.33 L946.78,453.33 L952.14,456.33 L957.50,453.83 L957.50,456 L-1.76,456Z" fill="#c23a44" fill-opacity="0.75" clip-path="url(#cl)"/>
<path d="M-1.76,459.17 L3.60,460.83 L8.96,456.33 L14.32,453.33 L19.67,461.33 L25.03,461.17 L30.39,461.17 L35.75,466.67 L41.11,472.50 L46.47,474.50 L51.83,472.50 L57.19,475.00 L62.55,477.50 L67.91,473.33 L73.26,466.17 L78.62,463.67 L83.98,464.67 L89.34,459.50 L94.70,458.33 L100.06,456.17 L105.42,458.33 L110.78,456.33 L116.14,453.33 L121.50,457.50 L126.86,456.33 L132.21,451.17 L137.57,452.17 L142.93,454.67 L148.29,454.67 L153.65,452.50 L159.01,455.50 L164.37,451.67 L169.73,448.33 L175.09,447.50 L180.45,446.33 L185.80,444.17 L191.16,443.00 L196.52,446.33 L201.88,442.17 L207.24,445.50 L212.60,445.50 L217.96,448.67 L223.32,462.50 L228.68,465.50 L234.03,458.33 L239.39,458.33 L244.75,460.50 L250.11,455.50 L255.47,452.50 L260.83,451.17 L266.19,453.67 L271.55,457.50 L276.91,456.33 L282.27,453.33 L287.62,451.33 L292.98,449.50 L298.34,449.50 L303.70,448.33 L309.06,446.17 L314.42,445.33 L319.78,445.33 L325.14,445.33 L330.50,444.17 L335.86,440.83 L341.22,446.33 L346.57,444.50 L351.93,446.67 L357.29,442.50 L362.65,440.50 L368.01,437.17 L373.37,437.50 L378.73,441.33 L384.09,438.33 L389.45,440.50 L394.80,439.50 L400.16,437.17 L405.52,439.17 L410.88,446.67 L416.24,445.50 L421.60,446.33 L426.96,448.67 L432.32,442.17 L437.68,445.50 L443.04,439.17 L448.39,435.00 L453.75,433.33 L459.11,440.50 L464.47,440.50 L469.83,445.50 L475.19,443.67 L480.55,453.33 L485.91,458.33 L491.27,450.00 L496.63,447.17 L501.99,452.50 L507.34,457.50 L512.70,460.33 L518.06,456.17 L523.42,456.17 L528.78,454.50 L534.14,458.33 L539.50,454.50 L544.86,453.33 L550.22,453.00 L555.58,452.00 L560.93,453.33 L566.29,447.17 L571.65,447.17 L577.01,445.33 L582.37,443.33 L587.73,442.50 L593.09,441.17 L598.45,444.17 L603.81,447.50 L609.16,447.50 L614.52,443.83 L619.88,440.33 L625.24,443.33 L630.60,444.50 L635.96,443.33 L641.32,451.33 L646.68,453.33 L652.04,450.33 L657.40,450.33 L662.75,453.33 L668.11,449.50 L673.47,453.00 L678.83,454.50 L684.19,460.33 L689.55,461.33 L694.91,466.17 L700.27,460.33 L705.63,458.67 L710.99,458.33 L716.35,452.50 L721.70,457.50 L727.06,452.17 L732.42,454.50 L737.78,455.50 L743.14,452.17 L748.50,450.33 L753.86,448.33 L759.22,448.33 L764.58,450.33 L769.93,457.50 L775.29,468.33 L780.65,462.00 L786.01,457.17 L791.37,454.67 L796.73,454.67 L802.09,451.33 L807.45,453.33 L812.81,458.33 L818.17,451.33 L823.52,449.50 L828.88,451.67 L834.24,449.50 L839.60,445.50 L844.96,445.50 L850.32,444.67 L855.68,443.67 L861.04,443.67 L866.40,442.17 L871.76,447.50 L877.12,445.50 L882.47,449.67 L887.83,446.33 L893.19,448.33 L898.55,455.50 L903.91,455.33 L909.27,457.50 L914.63,455.50 L919.99,462.50 L925.35,459.50 L930.71,461.17 L936.06,465.33 L941.42,458.33 L946.78,453.33 L952.14,456.33 L957.50,453.83" fill="none" stroke="#3bbcf3" stroke-width="2" stroke-linejoin="round" stroke-linecap="round"/>
<path d="M1000.2,85.5 L1007.5,76 H1080 V95 H1007.5 Z" fill="#17e69a"/>
<text x="1010.4" y="89.9" font-size="12" fill="#05130d" letter-spacing="0.36">14.630,50</text>
</svg>
<div class="lg" style="top:5px;width:465px"><svg width="20" height="16" viewBox="5 5 20 16" style="left:0;top:0"><g fill="none" stroke="#14d996" stroke-width="1" opacity="0.92"><path d="M6.5,9.5h2v4h-2zM7.5,14V18M10.5,11.5h2v4h-2zM11.5,7V11M11.5,16V18M14.5,13.5h2v4h-2zM15.5,9V13"/></g></svg><span class="g" style="left:18.2px;letter-spacing:-0.03px">DAX (L&amp;S weekend, Last)</span><span class="g" style="left:163.2px;letter-spacing:0px">O:</span><span class="g" style="left:178.4px;letter-spacing:-0.17px">13.869,50</span><span class="g" style="left:239.2px;letter-spacing:0px">H:</span><span class="g" style="left:254.2px;letter-spacing:-0.17px">14.634,50</span><span class="g" style="left:315.2px;letter-spacing:0px">L:</span><span class="g" style="left:328.4px;letter-spacing:-0.17px">13.869,50</span><span class="g" style="left:389.0px;letter-spacing:0px">C:</span><span class="g" style="left:403.9px;letter-spacing:-0.17px">14.630,50</span></div>
<div class="lg" style="top:21px;width:258.5px"><svg width="20" height="16" viewBox="5 21 20 16" style="left:0;top:0"><rect x="8.8" y="28" width="8.1" height="3" rx="0.6" fill="#f6d98a"/></svg><span class="y" style="left:18.2px;letter-spacing:-0.15px">BB(20, 2)</span><span class="y" style="left:74.8px;letter-spacing:-0.17px">16.741,90</span><span class="r" style="left:135.9px;letter-spacing:-0.17px">14.452,10</span><span class="g" style="left:197.0px;letter-spacing:-0.17px">12.162,30</span></div>
<div class="lg" style="top:37px;width:270px"><svg width="20" height="16" viewBox="5 37 20 16" style="left:0;top:0"><circle cx="12.5" cy="44.6" r="5" fill="none" stroke="#e6e7ea" stroke-width="1.15"/><path d="M12.5,41.6V44.9L14.4,46.4" fill="none" stroke="#e6e7ea" stroke-width="1.15" stroke-linecap="round" stroke-linejoin="round"/></svg><span class="w" style="left:18.8px;letter-spacing:-0.19px">01.02.2008 - 01.01.2023</span><span class="w" style="left:161.2px;letter-spacing:-0.12px">(15 Jahre, 1 Monat)</span></div>
<div class="lg" style="top:418.5px;width:101px;height:15px"><svg width="20" height="16" viewBox="5 418 20 16" style="left:0;top:0"><rect x="8.8" y="424.5" width="8.1" height="3" rx="0.6" fill="#3dbff5"/></svg><span class="b" style="left:18.2px;line-height:15px">RSI(14)</span><span class="b" style="left:64.2px;line-height:15px">53,92</span></div>
</body></html>
